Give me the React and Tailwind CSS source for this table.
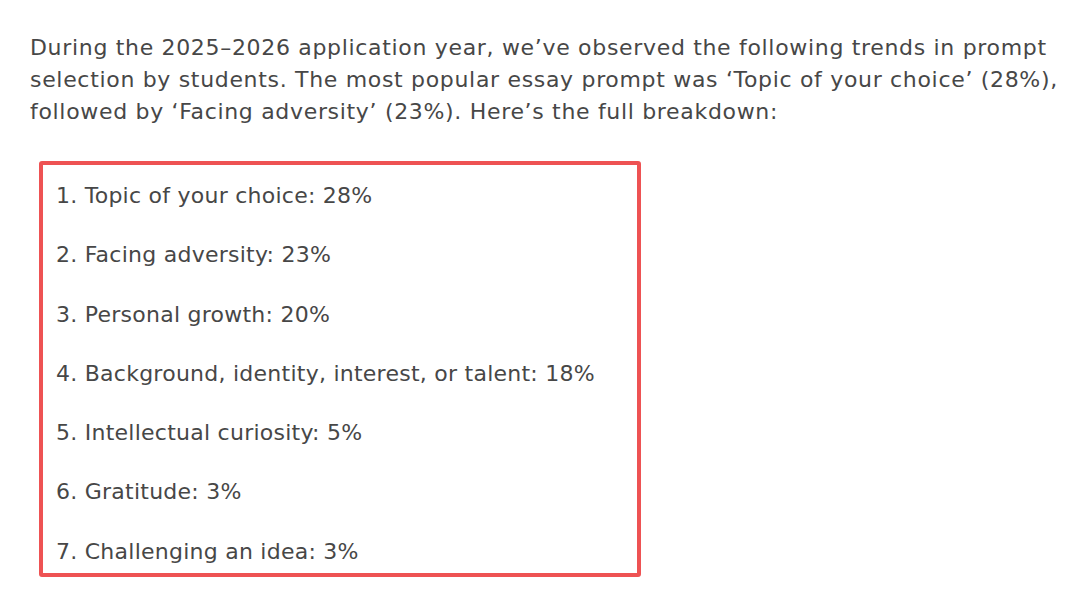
export default function App() {
  const items = [
    "1. Topic of your choice: 28%",
    "2. Facing adversity: 23%",
    "3. Personal growth: 20%",
    "4. Background, identity, interest, or talent: 18%",
    "5. Intellectual curiosity: 5%",
    "6. Gratitude: 3%",
    "7. Challenging an idea: 3%",
  ];

  return (
    <div className="w-[1080px] h-[589px] bg-white overflow-hidden font-['DejaVu_Sans',sans-serif] text-[#474747]">
      <div className="pl-[30px] pr-4 pt-[32px]">
        <p className="text-[22px] leading-[32px] tracking-[0.68px] whitespace-nowrap">
          During the 2025–2026 application year, we’ve observed the following trends in prompt
          <br />
          selection by students. The most popular essay prompt was ‘Topic of your choice’ (28%),
          <br />
          followed by ‘Facing adversity’ (23%). Here’s the full breakdown:
        </p>
        <div className="mt-[33px] ml-[9px] w-[602px] h-[416px] border-4 border-[#ee5253] rounded-[3px] pl-[13px] pt-[15px]">
          <ul className="flex flex-col gap-[27.3px]">
            {items.map((item) => (
              <li key={item} className="text-[22px] leading-[32px] tracking-[0.25px]">{item}</li>
            ))}
          </ul>
        </div>
      </div>
    </div>
  );
}
